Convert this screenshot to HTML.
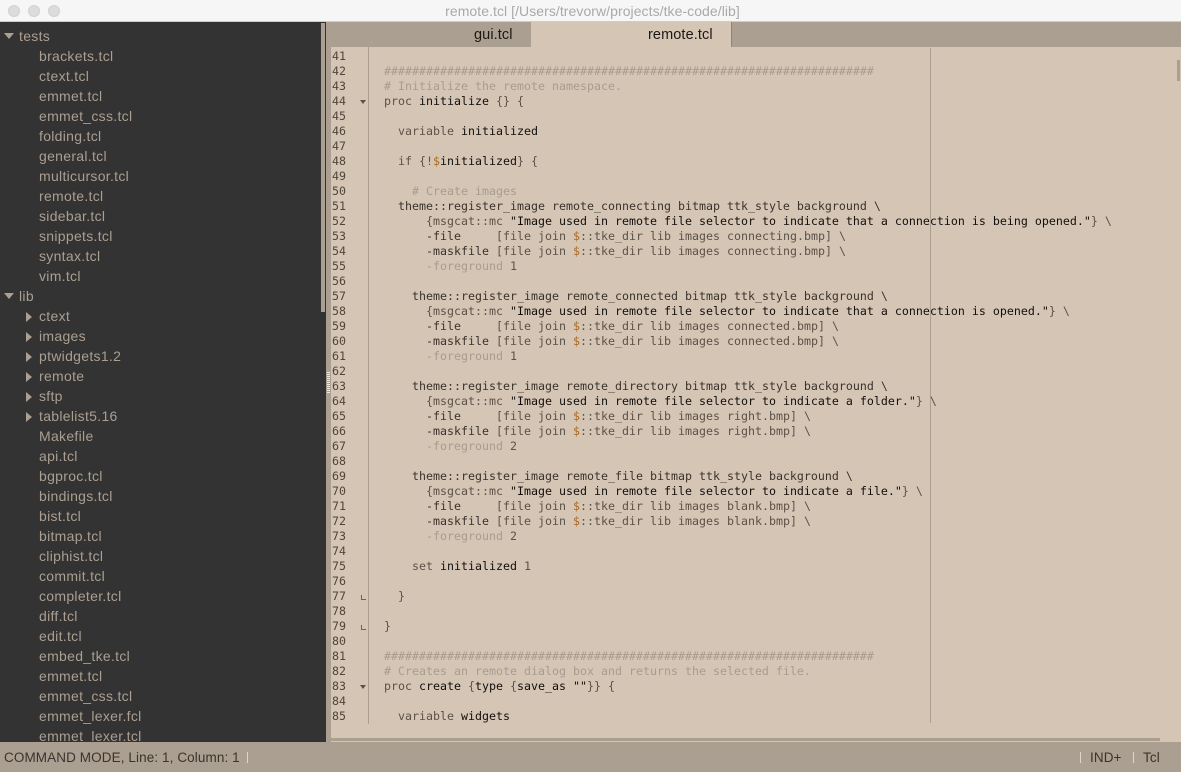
<!DOCTYPE html>
<html><head><meta charset="utf-8">
<style>
html,body{margin:0;padding:0;width:1181px;height:772px;overflow:hidden;background:#d5c5b5}
div,pre{position:absolute;margin:0}
#title{left:0;top:0;width:1181px;height:21px;background:#f6f6f6;border-bottom:1px solid #cfcbc6}
.dot{top:5px;width:12px;height:12px;border-radius:50%;background:#dcdcdc;box-sizing:border-box;border:1px solid #d2d2d2}
#ttl{left:0;width:1185px;top:3px;text-align:center;font:14px/16px "Liberation Sans",sans-serif;color:#a9a9a9;letter-spacing:.06px}
#side{left:0;top:22px;width:326px;height:720px;background:#333;overflow:hidden}
.r{left:39px;height:20px;font:14px/20px "Liberation Sans",sans-serif;color:#ab9f91;white-space:pre;letter-spacing:.3px}
.r.t{left:19px}
.sb{left:321px;top:1px;width:4px;height:289px;background:#ab9f91}
.tr{width:0;height:0}
.down{left:4px;border-left:5.5px solid transparent;border-right:5.5px solid transparent;border-top:6px solid #ab9f91}
.right{left:26px;border-top:5px solid transparent;border-bottom:5px solid transparent;border-left:6px solid #ab9f91}
#tabs{left:326px;top:22px;width:855px;height:25px;background:#ab9f91}
#tab{left:205px;top:0;width:200px;height:25px;background:#d5c5b5;border-right:1px solid #8e8478}
.tt{top:1px;font:14.5px/25px "Liberation Sans",sans-serif;color:#1c1815;white-space:pre;letter-spacing:.1px}
#strip{left:326px;top:47px;width:5px;height:695px;background:#ab9f91}
#gut{left:368px;top:47px;width:1px;height:677px;background:#ab9f91}
#mar{left:930px;top:48px;width:1px;height:675px;background:#ab9f91}
#nums,#code{top:49px;font:11.63px/15px "DejaVu Sans Mono",monospace;white-space:pre;color:#5c5248}
#nums{left:332px;color:#4e453b}
#code{left:384px}
.d{color:#120f0c}
.m{color:#3a332c}
.c{color:#a89c8f}
.o{color:#ab6a22}
.fd{left:360px;border-left:3.5px solid transparent;border-right:3.5px solid transparent;border-top:4px solid #5c5248}
.fe{left:361px;width:4px;height:4px;border-left:1px solid #6b6156;border-bottom:1px solid #6b6156}
#hs{left:331px;top:738px;width:829px;height:3px;background:#ab9f91}
#vs{left:1177px;top:60px;width:3px;height:21px;background:#ab9f91}
#status{left:0;top:742px;width:1181px;height:30px;background:#ab9f91}
.st{top:8px;font:13.5px/16px "Liberation Sans",sans-serif;color:#3a342e;white-space:pre;letter-spacing:.1px}
.sep{top:10px;width:1px;height:11px;background:#e0d5c8}
</style></head><body>
<div id="title">
<div class="dot" style="left:8px"></div><div class="dot" style="left:28px"></div><div class="dot" style="left:48px"></div>
<div id="ttl">remote.tcl [/Users/trevorw/projects/tke-code/lib]</div>
</div>
<div id="side">
<div class="sb"></div>
<div class="tr down" style="top:11px"></div><div class="r t" style="top:4px">tests</div>
<div class="r" style="top:24px">brackets.tcl</div>
<div class="r" style="top:44px">ctext.tcl</div>
<div class="r" style="top:64px">emmet.tcl</div>
<div class="r" style="top:84px">emmet_css.tcl</div>
<div class="r" style="top:104px">folding.tcl</div>
<div class="r" style="top:124px">general.tcl</div>
<div class="r" style="top:144px">multicursor.tcl</div>
<div class="r" style="top:164px">remote.tcl</div>
<div class="r" style="top:184px">sidebar.tcl</div>
<div class="r" style="top:204px">snippets.tcl</div>
<div class="r" style="top:224px">syntax.tcl</div>
<div class="r" style="top:244px">vim.tcl</div>
<div class="tr down" style="top:271px"></div><div class="r t" style="top:264px">lib</div>
<div class="tr right" style="top:290px"></div><div class="r" style="top:284px">ctext</div>
<div class="tr right" style="top:310px"></div><div class="r" style="top:304px">images</div>
<div class="tr right" style="top:330px"></div><div class="r" style="top:324px">ptwidgets1.2</div>
<div class="tr right" style="top:350px"></div><div class="r" style="top:344px">remote</div>
<div class="tr right" style="top:370px"></div><div class="r" style="top:364px">sftp</div>
<div class="tr right" style="top:390px"></div><div class="r" style="top:384px">tablelist5.16</div>
<div class="r" style="top:404px">Makefile</div>
<div class="r" style="top:424px">api.tcl</div>
<div class="r" style="top:444px">bgproc.tcl</div>
<div class="r" style="top:464px">bindings.tcl</div>
<div class="r" style="top:484px">bist.tcl</div>
<div class="r" style="top:504px">bitmap.tcl</div>
<div class="r" style="top:524px">cliphist.tcl</div>
<div class="r" style="top:544px">commit.tcl</div>
<div class="r" style="top:564px">completer.tcl</div>
<div class="r" style="top:584px">diff.tcl</div>
<div class="r" style="top:604px">edit.tcl</div>
<div class="r" style="top:624px">embed_tke.tcl</div>
<div class="r" style="top:644px">emmet.tcl</div>
<div class="r" style="top:664px">emmet_css.tcl</div>
<div class="r" style="top:684px">emmet_lexer.fcl</div>
<div class="r" style="top:704px">emmet_lexer.tcl</div>
</div>
<div id="tabs">
<div id="tab"></div>
<div class="tt" style="left:148px">gui.tcl</div>
<div class="tt" style="left:322px">remote.tcl</div>
</div>
<div id="strip"></div>
<div style="left:327px;top:372px;width:3px;height:21px;background:repeating-linear-gradient(#f0ebe4 0 1px,#ab9f91 1px 2px)"></div>
<div id="gut"></div>
<div id="mar"></div>
<pre id="nums">41
42
43
44
45
46
47
48
49
50
51
52
53
54
55
56
57
58
59
60
61
62
63
64
65
66
67
68
69
70
71
72
73
74
75
76
77
78
79
80
81
82
83
84
85</pre>
<pre id="code"><span></span>
<span class="c">######################################################################</span>
<span class="c"># Initialize the remote namespace.</span>
proc <span class="d">initialize</span> {} {

  variable <span class="d">initialized</span>

  if {!<span class="o">$</span><span class="d">initialized</span>} {

    <span class="c"># Create images</span>
  <span class="m">theme::register_image remote_connecting bitmap ttk_style background \</span>
      {msgcat::mc <span class="d">"Image used in remote file selector to indicate that a connection is being opened."</span>} \
      <span class="m">-file</span>     [file join <span class="o">$</span>::tke_dir lib images connecting.bmp] \
      <span class="m">-maskfile</span> [file join <span class="o">$</span>::tke_dir lib images connecting.bmp] \
      <span class="c">-foreground</span> 1

    <span class="m">theme::register_image remote_connected bitmap ttk_style background \</span>
      {msgcat::mc <span class="d">"Image used in remote file selector to indicate that a connection is opened."</span>} \
      <span class="m">-file</span>     [file join <span class="o">$</span>::tke_dir lib images connected.bmp] \
      <span class="m">-maskfile</span> [file join <span class="o">$</span>::tke_dir lib images connected.bmp] \
      <span class="c">-foreground</span> 1

    <span class="m">theme::register_image remote_directory bitmap ttk_style background \</span>
      {msgcat::mc <span class="d">"Image used in remote file selector to indicate a folder."</span>} \
      <span class="m">-file</span>     [file join <span class="o">$</span>::tke_dir lib images right.bmp] \
      <span class="m">-maskfile</span> [file join <span class="o">$</span>::tke_dir lib images right.bmp] \
      <span class="c">-foreground</span> 2

    <span class="m">theme::register_image remote_file bitmap ttk_style background \</span>
      {msgcat::mc <span class="d">"Image used in remote file selector to indicate a file."</span>} \
      <span class="m">-file</span>     [file join <span class="o">$</span>::tke_dir lib images blank.bmp] \
      <span class="m">-maskfile</span> [file join <span class="o">$</span>::tke_dir lib images blank.bmp] \
      <span class="c">-foreground</span> 2

    set <span class="d">initialized</span> 1

  }

}

<span class="c">######################################################################</span>
<span class="c"># Creates an remote dialog box and returns the selected file.</span>
proc <span class="d">create</span> {<span class="d">type</span> {<span class="d">save_as</span> <span class="d">""</span>}} {

  variable <span class="d">widgets</span></pre>
<div class="tr fd" style="top:100px"></div>
<div class="tr fd" style="top:685px"></div>
<div class="fe" style="top:595px"></div>
<div class="fe" style="top:625px"></div>
<div id="hs"></div>
<div id="vs"></div>
<div id="status">
<div class="st" style="left:4px">COMMAND MODE, Line: 1, Column: 1</div>
<div class="sep" style="left:247px"></div>
<div class="sep" style="left:1080px"></div>
<div class="st" style="left:1090px">IND+</div>
<div class="sep" style="left:1133px"></div>
<div class="st" style="left:1143px">Tcl</div>
</div>
</body></html>
